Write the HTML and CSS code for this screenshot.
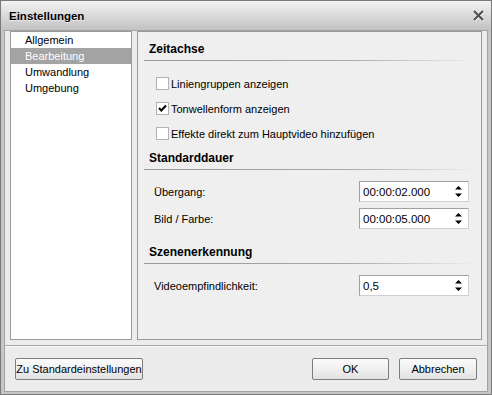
FILE: index.html
```html
<!DOCTYPE html>
<html lang="de">
<head>
<meta charset="utf-8">
<title>Einstellungen</title>
<link rel="stylesheet" href="styles.css">
</head>
<body>
<div class="window">
  <div class="titlebar">
    <span class="title">Einstellungen</span>
    <svg class="close" width="13" height="13" viewBox="0 0 13 13">
      <path d="M2 2 L11 11 M11 2 L2 11" stroke="#ffffff" stroke-width="2.2" transform="translate(0.6,0.8)" fill="none"/>
      <path d="M2 2 L11 11 M11 2 L2 11" stroke="#4d4d4d" stroke-width="2" fill="none"/>
    </svg>
  </div>
  <div class="client">
    <div class="main">
      <ul class="list">
        <li>Allgemein</li>
        <li class="selected">Bearbeitung</li>
        <li>Umwandlung</li>
        <li>Umgebung</li>
      </ul>
      <div class="panel">
        <div class="section-head first">Zeitachse</div>
        <div class="sep"></div>
        <div class="checks">
          <label class="check-row"><span class="box"></span>Liniengruppen anzeigen</label>
          <label class="check-row"><span class="box checked"><svg width="11" height="11" viewBox="0 0 11 11"><path d="M2 5 L4.3 7.5 L9 2.5" stroke="#000" stroke-width="2" fill="none"/></svg></span>Tonwellenform anzeigen</label>
          <label class="check-row"><span class="box"></span>Effekte direkt zum Hauptvideo hinzufügen</label>
        </div>
        <div class="section-head second">Standarddauer</div>
        <div class="sep"></div>
        <div class="fields">
          <div class="field-row"><span class="label">Übergang:</span>
            <div class="spin"><span class="val">00:00:02.000</span><svg class="arrows" width="9" height="13" viewBox="0 0 9 13"><path d="M4.5 1 L8 4.5 L1 4.5 Z M1 8.5 L8 8.5 L4.5 12 Z" fill="#000"/></svg></div>
          </div>
          <div class="field-row"><span class="label">Bild / Farbe:</span>
            <div class="spin"><span class="val">00:00:05.000</span><svg class="arrows" width="9" height="13" viewBox="0 0 9 13"><path d="M4.5 1 L8 4.5 L1 4.5 Z M1 8.5 L8 8.5 L4.5 12 Z" fill="#000"/></svg></div>
          </div>
        </div>
        <div class="section-head third">Szenenerkennung</div>
        <div class="sep"></div>
        <div class="fields">
          <div class="field-row"><span class="label">Videoempfindlichkeit:</span>
            <div class="spin"><span class="val">0,5</span><svg class="arrows" width="9" height="13" viewBox="0 0 9 13"><path d="M4.5 1 L8 4.5 L1 4.5 Z M1 8.5 L8 8.5 L4.5 12 Z" fill="#000"/></svg></div>
          </div>
        </div>
      </div>
    </div>
    <div class="footer-sep"></div>
    <div class="footer">
      <button class="btn wide">Zu Standardeinstellungen</button>
      <div class="spacer"></div>
      <button class="btn ok">OK</button>
      <button class="btn cancel">Abbrechen</button>
    </div>
  </div>
</div>
</body>
</html>
```

FILE: styles.css
```css
* { box-sizing: border-box; }
html, body { margin: 0; padding: 0; background: #ffffff; }
body {
  font-family: "Liberation Sans", Arial, sans-serif;
  font-size: 11px;
  color: #000;
}
.window {
  width: 492px;
  height: 395px;
  border: 1px solid #7a7a7a;
  background: #c6c6c6;
  display: flex;
  flex-direction: column;
}
.titlebar {
  height: 29px;
  margin: 0 -0px;
  background: linear-gradient(#f3f3f3 0%, #dcdcdc 45%, #c2c2c2 100%);
  display: flex;
  align-items: center;
  padding: 0 0 0 8px;
  position: relative;
}
.title {
  font-weight: bold;
  font-size: 11.5px;
  text-shadow: 0 1px 0 rgba(255,255,255,0.6);
  margin-top: 1px;
}
.close {
  position: absolute;
  left: 471px;
  top: 8px;
}
.client {
  flex: 1;
  margin: 0 3px 2px 3px;
  border: 1px solid #a3a3a3;
  background: #ececec;
  display: flex;
  flex-direction: column;
  padding-top: 0;
}
.main {
  display: flex;
  gap: 5px;
  padding: 0 5px;
  height: 309px;
}
.list {
  list-style: none;
  margin: 0;
  padding: 0;
  width: 122px;
  background: #ffffff;
  border: 1px solid #9a9a9a;
}
.list li {
  height: 16px;
  line-height: 16px;
  padding-left: 14px;
}
.list li.selected {
  background: #a3a3a3;
  color: #ffffff;
}
.panel {
  flex: 1;
  border: 1px solid #9a9a9a;
  background: #efefef;
  padding: 0 5px 0 6px;
  display: flex;
  flex-direction: column;
}
.section-head {
  font-weight: bold;
  font-size: 12px;
  height: 16px;
  line-height: 16px;
  padding-left: 5px;
}
.section-head.first { margin-top: 9px; }
.section-head.second { margin-top: 4px; }
.section-head.third { margin-top: 12px; }
.sep {
  height: 1px;
  margin-top: 3px;
  background: linear-gradient(to right, #989898 0%, #a8a8a8 60%, #efefef 100%);
}
.checks { margin-top: 10px; }
.check-row {
  display: flex;
  align-items: center;
  height: 25px;
  padding-left: 12px;
}
.box {
  width: 13px;
  height: 13px;
  border: 1px solid #b2b2b2;
  background: #ffffff;
  margin-right: 2px;
  display: flex;
  align-items: center;
  justify-content: center;
}
.fields { margin-top: 8px; }
.field-row {
  display: flex;
  align-items: center;
  justify-content: space-between;
  height: 27px;
  padding-left: 10px;
  padding-right: 7px;
}
.spin {
  width: 110px;
  height: 21px;
  border: 1px solid #a0a0a0;
  border-right-color: #d0d0d0;
  border-bottom-color: #d0d0d0;
  background: #ffffff;
  display: flex;
  align-items: center;
  justify-content: space-between;
  padding: 0 5px 0 3px;
}
.val { font-size: 11.5px; }
.arrows { display: block; }
.footer-sep {
  height: 2px;
  margin-top: 5px;
  border-top: 1px solid #a8a8a8;
  border-bottom: 1px solid #f8f8f8;
}
.footer {
  display: flex;
  align-items: center;
  padding: 11px 10px 0 10px;
  gap: 10px;
}
.spacer { flex: 1; }
.btn {
  font-family: "Liberation Sans", Arial, sans-serif;
  font-size: 11px;
  height: 22px;
  border: 1px solid #7d7d7d;
  border-radius: 2px;
  background: linear-gradient(#fbfbfb 0%, #f0f0f0 50%, #e0e0e0 100%);
  color: #000;
  padding: 0;
}
.btn.wide { width: 128px; }
.btn.ok { width: 77px; }
.btn.cancel { width: 78px; }
```
